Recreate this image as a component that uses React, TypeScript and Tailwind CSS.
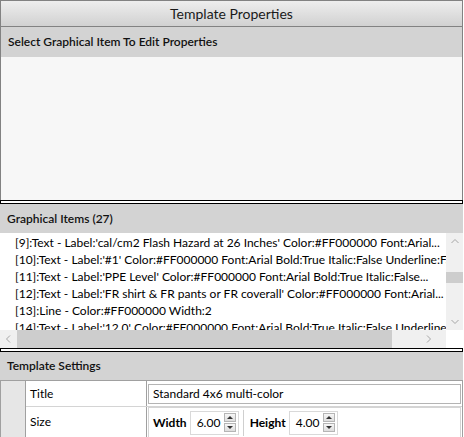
import React from 'react';

// ── Data ──────────────────────────────────────────────────────────────

const items = [
  "[9]:Text - Label:'cal/cm2 Flash Hazard at 26 Inches' Color:#FF000000 Font:Arial...",
  "[10]:Text - Label:'#1' Color:#FF000000 Font:Arial Bold:True Italic:False Underline:False",
  "[11]:Text - Label:'PPE Level' Color:#FF000000 Font:Arial Bold:True Italic:False...",
  "[12]:Text - Label:'FR shirt & FR pants or FR coverall' Color:#FF000000 Font:Arial...",
  '[13]:Line - Color:#FF000000 Width:2',
  "[14]:Text - Label:'12.0' Color:#FF000000 Font:Arial Bold:True Italic:False Underline:False",
];

// ── Small pieces ──────────────────────────────────────────────────────

function Chevron({ dir }: { dir: 'up' | 'down' | 'left' | 'right' }) {
  const d = {
    up: 'M1.5 6 L5 2.5 L8.5 6',
    down: 'M1.5 3 L5 6.5 L8.5 3',
    left: 'M6 1.5 L2.5 5 L6 8.5',
    right: 'M3 1.5 L6.5 5 L3 8.5',
  }[dir];
  return (
    <svg width="10" height="10" viewBox="0 0 10 10" className="block">
      <path d={d} fill="none" stroke="#a6a6a6" strokeWidth="1" />
    </svg>
  );
}

function SectionHeader({ children, className = '' }: { children: React.ReactNode; className?: string }) {
  return (
    <div className={`bg-[#d3d3d3] px-[7px] flex items-center font-semibold text-[#111] ${className}`}>
      {children}
    </div>
  );
}

function Splitter() {
  return <div className="h-[4px] border border-black bg-white shrink-0" />;
}

function Spinner() {
  return (
    <div className="flex flex-col gap-px">
      <div className="w-[12px] h-[9px] border border-[#b5b5b5] bg-gradient-to-b from-[#f6f6f6] to-[#dedede] flex items-center justify-center">
        <div className="w-0 h-0 border-x-[3px] border-x-transparent border-b-[3px] border-b-[#333]" />
      </div>
      <div className="w-[12px] h-[9px] border border-[#b5b5b5] bg-gradient-to-b from-[#f6f6f6] to-[#dedede] flex items-center justify-center">
        <div className="w-0 h-0 border-x-[3px] border-x-transparent border-t-[3px] border-t-[#333]" />
      </div>
    </div>
  );
}

function NumberBox({ value }: { value: string }) {
  return (
    <div className="w-[49px] h-[24px] border border-[#d9d9d9] bg-white flex items-center pl-[6px] pr-[2px]">
      <span className="flex-1">{value}</span>
      <Spinner />
    </div>
  );
}

// ── App ───────────────────────────────────────────────────────────────

export default function App() {
  return (
    <div className="w-[464px] h-[437px] overflow-hidden bg-white font-['Lato',sans-serif] text-[12px] text-black">
      <div className="w-[463px] h-full flex flex-col">
        {/* Title bar */}
        <div className="h-[27px] shrink-0 border border-[#828282] bg-gradient-to-b from-[#eeeeee] to-[#d1d1d1] flex items-center justify-center text-[14px] text-[#1a1a1a]">
          Template Properties
        </div>

        {/* Property editor area */}
        <div className="border-x border-[#828282] flex flex-col shrink-0">
          <SectionHeader className="h-[30px]">Select Graphical Item To Edit Properties</SectionHeader>
          <div className="h-[143px] bg-[#f7f7f7]" />
        </div>

        <Splitter />

        {/* Graphical items */}
        <SectionHeader className="h-[29px] shrink-0">Graphical Items (27)</SectionHeader>
        <div className="h-[115px] shrink-0 flex flex-col bg-white">
          <div className="h-[97px] flex overflow-hidden">
            <div className="flex-1 overflow-hidden pl-[15px] pt-px">
              {items.map((t) => (
                <div key={t} className="h-[17px] leading-[17px] whitespace-nowrap">
                  {t}
                </div>
              ))}
            </div>
            <div className="w-[17px] bg-[#f0f0f0] flex flex-col items-center">
              <div className="h-[17px] flex items-center justify-center">
                <Chevron dir="up" />
              </div>
              <div className="h-[22px]" />
              <div className="w-[17px] h-[11px] bg-[#cdcdcd]" />
              <div className="flex-1" />
              <div className="h-[17px] flex items-center justify-center">
                <Chevron dir="down" />
              </div>
            </div>
          </div>
          <div className="h-[18px] flex">
            <div className="flex-1 bg-[#f0f0f0] flex items-center">
              <div className="w-[17px] flex justify-center">
                <Chevron dir="left" />
              </div>
              <div className="w-[375px] h-[18px] bg-[#cdcdcd]" />
              <div className="flex-1 flex justify-center pl-[20px]">
                <Chevron dir="right" />
              </div>
            </div>
            <div className="w-[17px] bg-white" />
          </div>
        </div>

        <Splitter />

        {/* Template settings */}
        <SectionHeader className="h-[28px] shrink-0">Template Settings</SectionHeader>
        <div className="flex-1 flex border-t border-[#a0a0a0]">
          <div className="w-[26px] bg-[#e6e6e6] border-l border-r border-[#a0a0a0]" />
          <div className="flex-1 flex flex-col border-r border-[#a0a0a0]">
            <div className="h-[26px] flex border-b border-[#d4d4d4]">
              <div className="w-[121px] pl-[4px] flex items-center border-r border-[#a0a0a0]">Title</div>
              <div className="flex-1 flex items-center pl-px pr-px">
                <div className="flex-1 h-[20px] border border-[#b4b4b4] flex items-center pl-[4px]">
                  Standard 4x6 multi-color
                </div>
              </div>
            </div>
            <div className="flex-1 flex">
              <div className="w-[121px] pl-[4px] pt-[6px] border-r border-[#a0a0a0]">Size</div>
              <div className="flex-1 pl-px pr-px">
                <div className="h-full border border-b-0 border-[#d4d4d4] flex items-center pl-[4px]">
                  <span className="font-bold">Width</span>
                  <div className="ml-[3px]">
                    <NumberBox value="6.00" />
                  </div>
                  <div className="w-px h-[26px] bg-[#cfcfcf] ml-[4px]" />
                  <span className="font-bold ml-[6px]">Height</span>
                  <div className="ml-[3px]">
                    <NumberBox value="4.00" />
                  </div>
                </div>
              </div>
            </div>
          </div>
        </div>
      </div>
    </div>
  );
}
